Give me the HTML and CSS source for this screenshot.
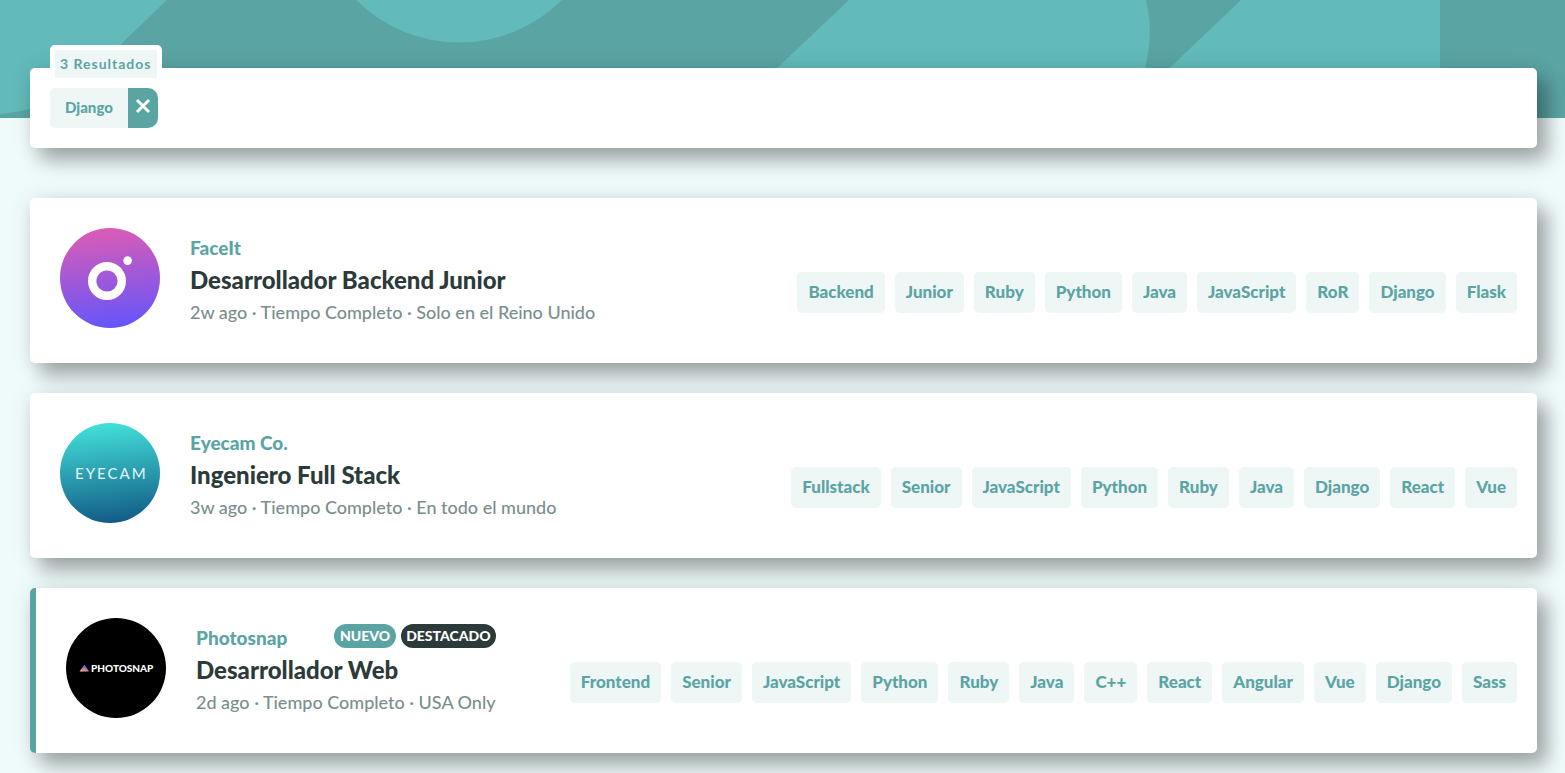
FILE: index.html
```html
<!DOCTYPE html>
<html lang="es">
<head>
<meta charset="utf-8">
<meta name="viewport" content="width=device-width, initial-scale=1">
<title>Ofertas de trabajo</title>
<link rel="stylesheet" href="styles.css">
</head>
<body>
<header class="hero">
  <svg class="hero-art" width="1440" height="118" viewBox="0 0 1440 118" aria-hidden="true">
    <g fill="#63baba">
      <path d="M0 0H167L96 68Q60 109 0 114Z"/>
      <circle cx="459" cy="-103" r="145.5"/>
      <path d="M849 0H1146Q1154 33 1145 68L1124 118H724Z"/>
      <path d="M1241 0H1440V118H1117Z"/>
    </g>
  </svg>
</header>
<main class="page">
  <section class="filter-bar" aria-label="Filtros">
    <p class="count">3 Resultados</p>
    <div class="filter">
      <span class="filter-name">Django</span>
      <button class="filter-remove" type="button" aria-label="Quitar Django">
        <svg width="16" height="16" viewBox="0 0 16 16" aria-hidden="true"><path d="M2 2L14 14M14 2L2 14" stroke="#fff" stroke-width="3"/></svg>
      </button>
    </div>
  </section>

  <article class="job">
    <svg class="logo" viewBox="0 0 100 100" role="img" aria-label="FaceIt">
      <defs><linearGradient id="face" x1="0.45" y1="0" x2="0.55" y2="1"><stop offset="0" stop-color="#db5cb5"/><stop offset="1" stop-color="#6555fb"/></linearGradient></defs>
      <circle cx="50" cy="50" r="50" fill="url(#face)"/>
      <circle cx="47" cy="53" r="14.8" fill="none" stroke="#fff" stroke-width="8.4"/>
      <circle cx="67.6" cy="32.6" r="4.3" fill="#fff"/>
    </svg>
    <div class="info">
      <div class="info-top"><span class="company">FaceIt</span></div>
      <h2 class="title">Desarrollador Backend Junior</h2>
      <p class="meta">2w ago · Tiempo Completo · Solo en el Reino Unido</p>
    </div>
    <div class="tags">
      <button class="tag" type="button">Backend</button>
      <button class="tag" type="button">Junior</button>
      <button class="tag" type="button">Ruby</button>
      <button class="tag" type="button">Python</button>
      <button class="tag" type="button">Java</button>
      <button class="tag" type="button">JavaScript</button>
      <button class="tag" type="button">RoR</button>
      <button class="tag" type="button">Django</button>
      <button class="tag" type="button">Flask</button>
    </div>
  </article>

  <article class="job">
    <svg class="logo" viewBox="0 0 100 100" role="img" aria-label="Eyecam">
      <defs><linearGradient id="eye" x1="0.45" y1="0" x2="0.55" y2="1"><stop offset="0" stop-color="#43e0d9"/><stop offset="1" stop-color="#125b86"/></linearGradient></defs>
      <circle cx="50" cy="50" r="50" fill="url(#eye)"/>
      <text class="eyecam" x="15" y="56">EYECAM</text>
    </svg>
    <div class="info">
      <div class="info-top"><span class="company">Eyecam Co.</span></div>
      <h2 class="title">Ingeniero Full Stack</h2>
      <p class="meta">3w ago · Tiempo Completo · En todo el mundo</p>
    </div>
    <div class="tags">
      <button class="tag" type="button">Fullstack</button>
      <button class="tag" type="button">Senior</button>
      <button class="tag" type="button">JavaScript</button>
      <button class="tag" type="button">Python</button>
      <button class="tag" type="button">Ruby</button>
      <button class="tag" type="button">Java</button>
      <button class="tag" type="button">Django</button>
      <button class="tag" type="button">React</button>
      <button class="tag" type="button">Vue</button>
    </div>
  </article>

  <article class="job featured">
    <svg class="logo" viewBox="0 0 100 100" role="img" aria-label="Photosnap">
      <defs><linearGradient id="snap" x1="0.7" y1="0" x2="0.3" y2="1"><stop offset="0.2" stop-color="#4f62e8"/><stop offset="0.65" stop-color="#c7799f"/><stop offset="1" stop-color="#f5b87c"/></linearGradient></defs>
      <circle cx="50" cy="50" r="50"/>
      <path d="M18.5 46.5L23 53.5H13.5Z" fill="url(#snap)"/>
      <text class="photosnap" x="25" y="53.5">PHOTOSNAP</text>
    </svg>
    <div class="info">
      <div class="info-top">
        <span class="company">Photosnap</span>
        <span class="badges"><span class="badge">NUEVO</span><span class="badge dark">DESTACADO</span></span>
      </div>
      <h2 class="title">Desarrollador Web</h2>
      <p class="meta">2d ago · Tiempo Completo · USA Only</p>
    </div>
    <div class="tags">
      <button class="tag" type="button">Frontend</button>
      <button class="tag" type="button">Senior</button>
      <button class="tag" type="button">JavaScript</button>
      <button class="tag" type="button">Python</button>
      <button class="tag" type="button">Ruby</button>
      <button class="tag" type="button">Java</button>
      <button class="tag" type="button">C++</button>
      <button class="tag" type="button">React</button>
      <button class="tag" type="button">Angular</button>
      <button class="tag" type="button">Vue</button>
      <button class="tag" type="button">Django</button>
      <button class="tag" type="button">Sass</button>
    </div>
  </article>
</main>
</body>
</html>
```
FILE: styles.css
```css
:root {
  --teal: #5ba4a4;
  --tint: #eef6f6;
  --ink: #2c3a3a;
  --shadow: 10px 12px 20px rgba(0, 0, 0, .33), 0 0 24px rgba(0, 0, 0, .08);
}
* { box-sizing: border-box; }
body {
  margin: 0;
  background: #effafa;
  font-family: Lato, "Liberation Sans", sans-serif;
  font-weight: 700;
}
h2, p { margin: 0; }
button { font: inherit; border: 0; cursor: pointer; }

.hero { height: 118px; background: var(--teal); overflow: hidden; }
.hero-art { display: block; }

.page {
  display: flex;
  flex-direction: column;
  gap: 30px;
  margin: -50px 28px 0 30px;
  padding-bottom: 20px;
}
.filter-bar {
  position: relative;
  margin-bottom: 20px;
  padding: 20px;
  background: #fff;
  border-radius: 5px;
  box-shadow: var(--shadow);
}
.count {
  position: absolute;
  left: 20px;
  top: -23px;
  padding: 0 5px;
  border: 5px solid #fff;
  border-radius: 5px;
  background: var(--tint);
  color: var(--teal);
  font-size: 14px;
  line-height: 28px;
  letter-spacing: 1px;
}
.filter { display: flex; width: max-content; }
.filter-name {
  padding: 0 15px;
  border-radius: 5px 0 0 5px;
  background: var(--tint);
  color: var(--teal);
  font-size: 15px;
  font-weight: 900;
  line-height: 38px;
}
.filter-remove {
  display: flex;
  justify-content: center;
  width: 30px;
  height: 40px;
  padding: 10px 0 0;
  border-radius: 0 10px 10px 0;
  background: var(--teal);
}

.job {
  display: flex;
  align-items: center;
  min-height: 165px;
  padding: 30px 20px 35px 30px;
  background: #fff;
  border-radius: 5px;
  box-shadow: var(--shadow);
}
.featured { border-left: 6px solid var(--teal); }
.logo { flex: none; width: 100px; height: 100px; }
.eyecam { fill: #e6f6f8; font-size: 15px; font-weight: 400; letter-spacing: 2px; }
.photosnap { fill: #fff; font-size: 10px; font-weight: 900; }

.info { flex: none; margin-left: 30px; padding-top: 4px; }
.info-top { display: flex; justify-content: space-between; height: 32px; line-height: 32px; }
.company { color: var(--teal); font-size: 19px; font-weight: 900; }
.title { color: var(--ink); font-size: 24px; font-weight: 900; line-height: 32px; }
.meta { color: #7b8e8e; font-size: 18px; font-weight: 500; line-height: 32px; }
.badges { display: flex; gap: 5px; padding-top: 2px; }
.badge {
  height: 24px;
  padding: 0 6px;
  border-radius: 12px;
  background: var(--teal);
  color: #fff;
  font-size: 14px;
  font-weight: 900;
  line-height: 23px;
}
.dark { padding: 0 5px; background: var(--ink); }

.tags {
  display: flex;
  flex-wrap: wrap;
  justify-content: flex-end;
  gap: 10px;
  margin-left: auto;
  padding: 28px 0 0 20px;
}
.tag {
  height: 41px;
  padding: 0 11px 2px;
  border-radius: 5px;
  background: var(--tint);
  color: var(--teal);
  font-size: 17px;
  font-weight: 900;
}
```
